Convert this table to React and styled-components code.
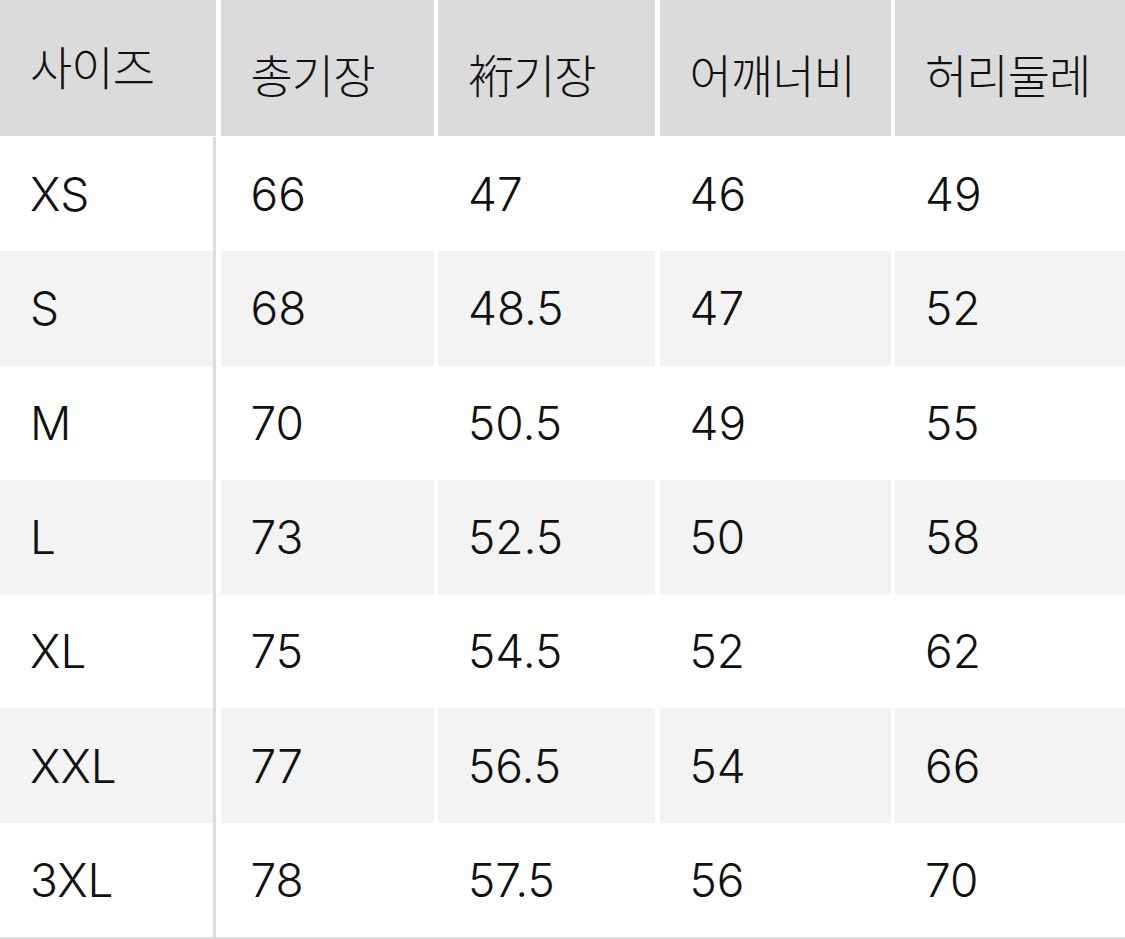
import React from 'react';
import styled, {createGlobalStyle} from 'styled-components';

const headers = ['사이즈', '총기장', '裄기장', '어깨너비', '허리둘레'];

const rows = [
	['XS', '66', '47', '46', '49'],
	['S', '68', '48.5', '47', '52'],
	['M', '70', '50.5', '49', '55'],
	['L', '73', '52.5', '50', '58'],
	['XL', '75', '54.5', '52', '62'],
	['XXL', '77', '56.5', '54', '66'],
	['3XL', '78', '57.5', '56', '70']
];

export default function App() {
	return (
		<>
			<GlobalStyle/>
			<Table>
				{headers.map((h, i) => (
					<HeadCell key={h} $raised={i === 0}>{h}</HeadCell>
				))}
				{rows.map((row, r) => row.map((value, c) => (
					<Cell key={`${r}-${c}`} $striped={r % 2 === 1} $first={c === 0}>
						{value}
					</Cell>
				)))}
			</Table>
		</>
	);
}

const GlobalStyle = createGlobalStyle`
	html, body {
		margin: 0;
		padding: 0;
		background: #fff;
	}
	body {
		font-family: Inter, "Noto Sans CJK KR", sans-serif;
		color: #111;
	}
`;

const Table = styled.div`
	display: grid;
	grid-template-columns: 216px 213px 217px 231px 1fr;
	grid-template-rows: 137px repeat(7, 1fr);
	column-gap: 4.5px;
	width: 1125px;
	height: 937px;
	border-bottom: 2px solid #dddddd;
`;

const HeadCell = styled.div`
	display: flex;
	align-items: center;
	height: 136px;
	padding: ${p => (p.$raised ? '0 0 6px 30px' : '10px 0 0 30px')};
	box-sizing: border-box;
	background: #dbdbdb;
	font-family: "Noto Sans CJK KR", sans-serif;
	font-size: 46px;
	font-weight: 300;
	letter-spacing: -1px;
`;

const Cell = styled.div`
	display: flex;
	align-items: center;
	padding-left: 30px;
	box-sizing: border-box;
	background: ${p => (p.$striped ? '#f3f3f3' : '#fff')};
	border-right: ${p => (p.$first ? '3px solid #dddddd' : 'none')};
	font-family: Inter, sans-serif;
	font-size: 46px;
	font-weight: 300;
`;
